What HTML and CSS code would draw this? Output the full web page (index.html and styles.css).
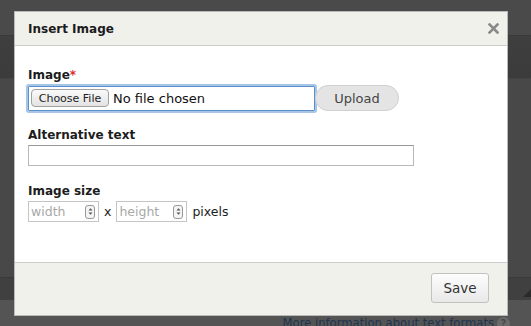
FILE: index.html
```html
<!DOCTYPE html>
<html>
<head>
<meta charset="utf-8">
<link rel="stylesheet" href="styles.css">
</head>
<body>
<div class="page">
  <div class="band band-top"></div>
  <div class="band band-tool"></div>
  <div class="band band-main"></div>
  <div class="band band-bottom"><span class="grip"></span></div>
  <div class="band band-foot">
    <span class="more">More information about text formats</span>
    <span class="help">?</span>
  </div>
</div>

<div class="dialog">
  <div class="dlg-head">
    <span class="dlg-title">Insert Image</span>
    <span class="dlg-close">
      <svg width="11" height="11" viewBox="0 0 11 11"><path d="M1.5 1.5 L9.5 9.5 M9.5 1.5 L1.5 9.5" stroke="#8a8a8a" stroke-width="2.6" stroke-linecap="square"/></svg>
    </span>
  </div>
  <div class="dlg-body">
    <div class="field">
      <label class="lbl">Image<span class="req">*</span></label>
      <div class="file-row">
        <div class="file-input">
          <span class="choose">Choose File</span>
          <span class="nofile">No file chosen</span>
        </div>
        <span class="upload">Upload</span>
      </div>
    </div>
    <div class="field">
      <label class="lbl">Alternative text</label>
      <div class="text-input"></div>
    </div>
    <div class="field">
      <label class="lbl">Image size</label>
      <div class="size-row">
        <div class="num"><span class="ph">width</span><span class="spin"><svg width="7" height="11" viewBox="0 0 7 11"><path d="M1.5 4.5 L3.5 2.2 L5.5 4.5Z M1.5 6.5 L3.5 8.8 L5.5 6.5Z" fill="#555"/></svg></span></div>
        <span class="sep">x</span>
        <div class="num"><span class="ph">height</span><span class="spin"><svg width="7" height="11" viewBox="0 0 7 11"><path d="M1.5 4.5 L3.5 2.2 L5.5 4.5Z M1.5 6.5 L3.5 8.8 L5.5 6.5Z" fill="#555"/></svg></span></div>
        <span class="unit">pixels</span>
      </div>
    </div>
  </div>
  <div class="dlg-foot">
    <span class="save">Save</span>
  </div>
</div>
</body>
</html>
```
FILE: styles.css
```css
html, body {
  margin: 0;
  padding: 0;
}
body {
  width: 531px;
  height: 326px;
  overflow: hidden;
  position: relative;
  font-family: "DejaVu Sans", Verdana, sans-serif;
  background: #474747;
}
.page {
  display: flex;
  flex-direction: column;
  height: 326px;
}
.band-top {
  height: 35px;
  background: #4a4a4a;
  border-bottom: 1px solid #3a3a3a;
}
.band-tool {
  height: 42px;
  background: linear-gradient(#3f3f3f, #3b3b3b);
  border-bottom: 1px solid #444;
}
.band-main {
  flex: 1;
  background: #484848;
}
.band-bottom {
  height: 22px;
  background: #404040;
  border-top: 1px solid #3a3a3a;
  position: relative;
}
.grip {
  position: absolute;
  right: 0;
  bottom: 3px;
  width: 0;
  height: 0;
  border-left: 8px solid transparent;
  border-bottom: 8px solid #2a2a2a;
}
.band-foot {
  height: 26px;
  background: #545454;
  display: flex;
  justify-content: flex-end;
  align-items: flex-start;
  padding-right: 21px;
  padding-top: 16px;
  box-sizing: border-box;
  gap: 3px;
}
.more {
  font-size: 11.6px;
  line-height: 14px;
  color: #1f3550;
  white-space: nowrap;
}
.help {
  width: 13px;
  height: 13px;
  border-radius: 50%;
  background: #6a6a6a;
  color: #4a4a4a;
  font-size: 10px;
  font-weight: bold;
  text-align: center;
  line-height: 13px;
  margin-top: 1px;
}

.dialog {
  position: absolute;
  left: 14px;
  top: 11px;
  width: 492px;
  height: 303px;
  border: 1px solid #b9b9b9;
  background: #fff;
  display: flex;
  flex-direction: column;
}
.dlg-head {
  height: 33px;
  background: #f1f1ec;
  border-bottom: 1px solid #cccccc;
  display: flex;
  align-items: center;
  justify-content: space-between;
  padding: 0 8px 0 13px;
}
.dlg-title {
  font-size: 12px;
  font-weight: bold;
  color: #1c1c1c;
}
.dlg-close {
  display: flex;
  width: 11px;
  height: 11px;
}
.dlg-body {
  flex: 1;
  padding: 22px 13px 0 13px;
  display: flex;
  flex-direction: column;
  gap: 17px;
}
.field {
  display: flex;
  flex-direction: column;
  gap: 3px;
}
.lbl {
  font-size: 12px;
  font-weight: bold;
  color: #1c1c1c;
  line-height: 14px;
}
.req {
  color: #e02b2b;
  font-weight: bold;
}
.file-row {
  display: flex;
  align-items: center;
}
.file-input {
  width: 281px;
  height: 23px;
  border: 1px solid #5a8fcb;
  box-shadow: 0 0 0 2px #a8c5e8;
  border-radius: 1px;
  display: flex;
  align-items: center;
  padding: 0 2px;
  gap: 4px;
}
.choose {
  width: 76px;
  height: 16px;
  border: 1px solid #a0a0a0;
  border-radius: 4px;
  background: linear-gradient(#fafafa, #e3e3e3);
  font-size: 11px;
  color: #222;
  display: flex;
  align-items: center;
  justify-content: center;
}
.nofile {
  font-size: 13px;
  color: #111;
}
.upload {
  width: 82px;
  height: 24px;
  border: 1px solid #d0d0d0;
  border-radius: 13px;
  background: #e4e4e4;
  font-size: 13px;
  color: #444;
  display: flex;
  align-items: center;
  justify-content: center;
}
.text-input {
  width: 384px;
  height: 19px;
  border: 1px solid #b8b8b8;
  border-top-color: #989898;
  margin-bottom: 1px;
}
.size-row {
  display: flex;
  align-items: center;
  gap: 5px;
}
.num {
  width: 64px;
  height: 19px;
  border: 1px solid #c4c4c4;
  display: flex;
  align-items: center;
  justify-content: space-between;
  padding: 0 3px 0 2px;
  box-sizing: content-box;
}
.num .ph {
  font-size: 12.5px;
  color: #a8a8a8;
}
.spin {
  width: 8px;
  height: 12px;
  border: 1px solid #999;
  border-radius: 3px;
  display: flex;
  align-items: center;
  justify-content: center;
  background: #f4f4f4;
}
.sep, .unit {
  font-size: 12.5px;
  color: #1c1c1c;
}
.dlg-foot {
  height: 53px;
  background: #f1f1ec;
  border-top: 1px solid #cccccc;
  display: flex;
  justify-content: flex-end;
  align-items: flex-start;
  padding: 10px 18px 0 0;
  box-sizing: border-box;
}
.save {
  width: 56px;
  height: 28px;
  border: 1px solid #c2c2c2;
  border-radius: 3px;
  background: linear-gradient(#fdfdfd, #e8e8e8);
  font-size: 13.5px;
  color: #333;
  display: flex;
  align-items: center;
  justify-content: center;
}
```
